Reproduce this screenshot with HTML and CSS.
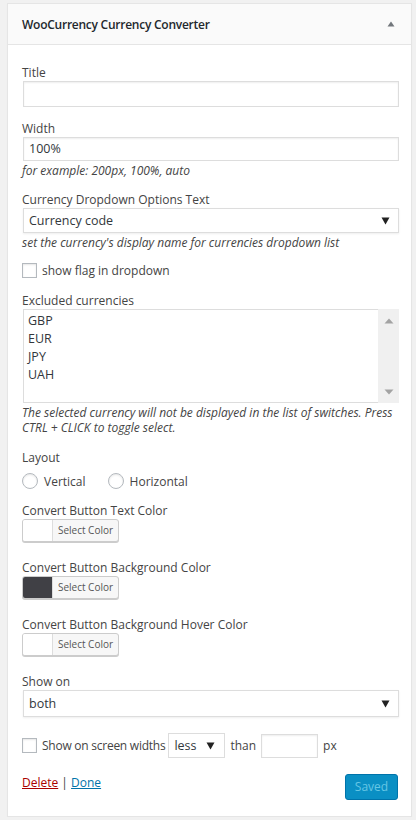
FILE: index.html
```html
<!DOCTYPE html>
<html>
<head>
<meta charset="utf-8">
<link rel="stylesheet" href="styles.css">
</head>
<body>
<div class="widget">
  <div class="widget-top">
    <h3 class="widget-title">WooCurrency Currency Converter</h3>
    <svg class="toggle" width="8" height="6" viewBox="0 0 8 6"><path d="M4 0.5 L7.5 5.5 L0.5 5.5 Z" fill="#72777c"/></svg>
  </div>
  <div class="widget-body">
    <div class="label first">Title</div>
    <div class="input tall"></div>

    <div class="label gap12">Width</div>
    <div class="input">100%</div>
    <div class="help">for example: 200px, 100%, auto</div>

    <div class="label gap12">Currency Dropdown Options Text</div>
    <div class="select">
      <span>Currency code</span>
      <svg width="9" height="8" viewBox="0 0 9 8"><path d="M0.5 0.5 L8.5 0.5 L4.5 7.5 Z" fill="#222"/></svg>
    </div>
    <div class="help">set the currency's display name for currencies dropdown list</div>

    <div class="check-row">
      <span class="checkbox"></span>
      <span>show flag in dropdown</span>
    </div>

    <div class="label gap12">Excluded currencies</div>
    <div class="multi">
      <div class="options">
        <div class="opt">GBP</div>
        <div class="opt">EUR</div>
        <div class="opt">JPY</div>
        <div class="opt">UAH</div>
      </div>
      <div class="scrollbar">
        <svg width="10" height="6" viewBox="0 0 10 6"><path d="M5 0.5 L9.5 5.5 L0.5 5.5 Z" fill="#a3a3a3"/></svg>
        <svg width="10" height="6" viewBox="0 0 10 6"><path d="M0.5 0.5 L9.5 0.5 L5 5.5 Z" fill="#a3a3a3"/></svg>
      </div>
    </div>
    <div class="help two">The selected currency will not be displayed in the list of switches. Press CTRL + CLICK to toggle select.</div>

    <div class="label gap13">Layout</div>
    <div class="radio-row">
      <span class="radio"></span><span class="radio-text">Vertical</span>
      <span class="radio"></span><span class="radio-text">Horizontal</span>
    </div>

    <div class="label gap11">Convert Button Text Color</div>
    <div class="color-btn"><span class="swatch"></span><span class="btn-text">Select Color</span></div>

    <div class="label gap16">Convert Button Background Color</div>
    <div class="color-btn"><span class="swatch dark"></span><span class="btn-text">Select Color</span></div>

    <div class="label gap16">Convert Button Background Hover Color</div>
    <div class="color-btn"><span class="swatch"></span><span class="btn-text">Select Color</span></div>

    <div class="label gap16">Show on</div>
    <div class="select big">
      <span>both</span>
      <svg width="9" height="8" viewBox="0 0 9 8"><path d="M0.5 0.5 L8.5 0.5 L4.5 7.5 Z" fill="#222"/></svg>
    </div>

    <div class="width-row">
      <span class="checkbox"></span>
      <span class="row-text tight">Show on screen widths</span>
      <span class="small-select"><span>less</span><svg width="9" height="8" viewBox="0 0 9 8"><path d="M0.5 0.5 L8.5 0.5 L4.5 7.5 Z" fill="#222"/></svg></span>
      <span class="row-text">than</span>
      <span class="small-input"></span>
      <span class="row-text">px</span>
    </div>

    <div class="footer">
      <div class="links"><a class="delete">Delete</a> | <a class="done">Done</a></div>
      <div class="saved">Saved</div>
    </div>
  </div>
</div>
</body>
</html>
```

FILE: styles.css
```css
html, body {
  margin: 0;
  padding: 0;
  background: #f1f1f1;
}
body {
  padding: 3px 4px 0 7px;
  font-family: "Open Sans", "Noto Sans", sans-serif;
  font-size: 12px;
  color: #444;
}
.widget {
  background: #fff;
  border: 1px solid #e5e5e5;
  box-shadow: 0 1px 1px rgba(0,0,0,0.04);
}
.widget-top {
  height: 40px;
  background: #fafafa;
  border-bottom: 1px solid #e5e5e5;
  display: flex;
  align-items: center;
  justify-content: space-between;
  padding: 0 16px 0 14px;
}
.widget-title {
  margin: 0;
  font-size: 12px;
  font-weight: 600;
  letter-spacing: -0.25px;
  color: #23282d;
}
.toggle {
  display: block;
}
.widget-body {
  padding: 18px 12px 16px 14px;
}
.label {
  padding-top: 1px;
  line-height: 17px;
  color: #444;
}
.gap11 { margin-top: 11px; }
.gap12 { margin-top: 12px; }
.gap13 { margin-top: 13px; }
.gap16 { margin-top: 16px; }
.input {
  margin-left: 1px;
  height: 24px;
  border: 1px solid #ddd;
  box-shadow: inset 0 1px 2px rgba(0,0,0,0.07);
  box-sizing: border-box;
  padding: 0 5px;
  line-height: 22px;
  font-size: 12.5px;
  color: #32373c;
}
.input.tall { height: 26px; }
.help {
  margin-top: 1px;
  padding-top: 1px;
  font-style: italic;
  line-height: 15px;
  color: #444;
}
.help.two {
  margin-top: 2px;
  padding-top: 0;
  line-height: 15px;
}
.select {
  margin-left: 1px;
  height: 25px;
  box-sizing: border-box;
  border: 1px solid #ddd;
  box-shadow: 0 1px 2px rgba(0,0,0,0.07);
  display: flex;
  align-items: center;
  justify-content: space-between;
  padding: 0 8px 0 5px;
  font-size: 12.5px;
  color: #32373c;
}
.select svg { display: block; }
.select.big { height: 27px; }
.check-row {
  margin-top: 11px;
  display: flex;
  align-items: center;
  height: 18px;
  gap: 5px;
}
.checkbox {
  width: 15px;
  height: 15px;
  box-sizing: border-box;
  border: 1px solid #b4b9be;
  background: #fff;
  box-shadow: inset 0 1px 2px rgba(0,0,0,0.1);
  flex: none;
}
.multi {
  margin-left: 1px;
  height: 94px;
  box-sizing: border-box;
  border: 1px solid #ddd;
  border-right: none;
  display: flex;
}
.options {
  flex: 1;
  padding: 2px 0 0 4px;
  font-size: 12.5px;
  color: #32373c;
}
.opt {
  line-height: 18px;
}
.scrollbar {
  width: 21px;
  margin-top: -1px;
  margin-bottom: -1px;
  background: #f0f0f0;
  display: flex;
  flex-direction: column;
  justify-content: space-between;
  align-items: center;
  padding: 9px 0 8px;
  box-sizing: border-box;
}
.scrollbar svg { display: block; }
.radio-row {
  margin-top: 6px;
  display: flex;
  align-items: center;
  height: 18px;
}
.radio {
  width: 16px;
  height: 16px;
  box-sizing: border-box;
  border: 1px solid #b4b9be;
  border-radius: 50%;
  box-shadow: inset 0 1px 2px rgba(0,0,0,0.1);
  flex: none;
}
.radio-text {
  margin-left: 6px;
  margin-right: 22px;
}
.color-btn {
  display: flex;
  width: 97px;
  height: 23px;
  box-sizing: border-box;
  border: 1px solid #ccc;
  border-radius: 3px;
  box-shadow: 0 1px 0 #ccc;
  overflow: hidden;
  background: #f7f7f7;
}
.swatch {
  width: 29px;
  border-right: 1px solid #ddd;
  background: #fff;
  flex: none;
}
.swatch.dark { background: #404045; }
.btn-text {
  flex: 1;
  font-size: 10px;
  line-height: 21px;
  text-align: center;
  color: #555;
}
.width-row {
  margin-top: 16px;
  display: flex;
  align-items: center;
  height: 25px;
}
.row-text { margin-left: 5px; }
.row-text.tight { letter-spacing: -0.25px; }
.small-select {
  margin-left: 3px;
  width: 57px;
  height: 25px;
  box-sizing: border-box;
  border: 1px solid #ddd;
  display: flex;
  align-items: center;
  justify-content: space-between;
  padding: 0 9px 0 5px;
  font-size: 12.5px;
  color: #32373c;
}
.small-select svg { display: block; }
.small-input {
  margin-left: 5px;
  width: 57px;
  height: 24px;
  box-sizing: border-box;
  border: 1px solid #ddd;
  box-shadow: inset 0 1px 2px rgba(0,0,0,0.07);
}
.footer {
  margin-top: 16px;
  display: flex;
  justify-content: space-between;
  align-items: flex-start;
}
.links {
  line-height: 18px;
}
.delete { color: #a00; text-decoration: underline; }
.done { color: #0073aa; text-decoration: underline; }
.saved {
  margin-right: 1px;
  width: 53px;
  height: 26px;
  box-sizing: border-box;
  border: 1px solid #0073aa;
  border-radius: 3px;
  background: #0a8fc4;
  color: #66c6e4;
  text-align: center;
  line-height: 24px;
}
```
